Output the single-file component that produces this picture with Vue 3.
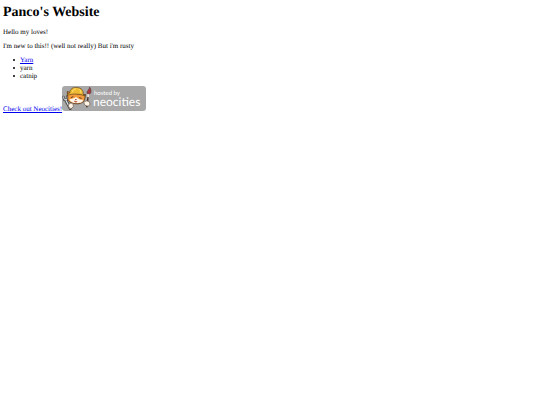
<script setup>
const items = [
  { text: 'Yarn', href: '#yarn' },
  { text: 'yarn' },
  { text: 'catnip' },
]
</script>

<template>
  <main class="page">
    <h1>Panco's Website</h1>
    <p>Hello my loves!</p>
    <p>I'm new to this!! (well not really) But i'm rusty</p>
    <ul>
      <li v-for="item in items" :key="item.text">
        <a v-if="item.href" :href="item.href">{{ item.text }}</a>
        <template v-else>{{ item.text }}</template>
      </li>
    </ul>
    <div class="hosting">
      <a href="#neocities">Check out Neocities!</a>
      <svg class="badge" viewBox="0 0 84 25" role="img" aria-label="hosted by neocities">
        <rect width="84" height="25" rx="3" fill="#a8a8a8" />
        <!-- wrench -->
        <g stroke-linecap="round" fill="none">
          <path d="M4 14.5 L8.3 22.5" stroke="#3c3c3c" stroke-width="3" />
          <path d="M1.5 10.8 L2.3 13.8 L5 13.4 L5.4 10.2" stroke="#3c3c3c" stroke-width="2.2" />
          <path d="M4 14.5 L8.3 22.5" stroke="#d7dce0" stroke-width="1.4" />
          <path d="M1.5 10.8 L2.3 13.8 L5 13.4 L5.4 10.2" stroke="#d7dce0" stroke-width="1" />
        </g>
        <!-- cat head -->
        <path d="M5.2 5.6 L5.8 11.6 C5.1 14.2 7.5 16.8 11.7 17.4 C16.5 18.7 21.4 17.1 22.5 13.8 L23.6 8.5 L19.6 8.5 L10 6.8 Z" fill="#f39a3b" stroke="#51351f" stroke-width=".8" stroke-linejoin="round" />
        <path d="M14 11 C12.4 13 9.2 12.4 7.4 13.4 C8.3 16 11.3 17 14.9 17.1 C18.8 17.3 21 15.8 21.4 14 C18.8 13.8 16 13.2 14 11Z" fill="#fff4e6" />
        <path d="M9.3 11.5 L10.9 10.8 M17.6 11.7 L19.2 12.3" stroke="#513320" stroke-width=".9" stroke-linecap="round" />
        <path d="M12.8 13 L15 13.2 L13.8 14.3Z" fill="#4b2922" />
        <path d="M12 14.8 Q13.7 15.5 15.4 15 Q15 16.6 13.6 16.5 Q12.3 16.4 12 14.8Z" fill="#b64632" />
        <!-- hard hat -->
        <path d="M7.7 7 C8 2.8 11.1.9 15.4 1.5 C19.4 2 21.7 4.5 21.1 8.3 L23 10 C17.2 7.7 11.2 7.4 5.3 9.3 L5.2 8.2Z" fill="#efbb34" stroke="#65481e" stroke-width=".7" stroke-linejoin="round" />
        <path d="M10 6.3 Q10.8 3.2 14 2.7 M17 3 Q19 4.3 19 6.9" fill="none" stroke="#ffe071" stroke-width="1" />
        <!-- brush -->
        <path d="M26.1 10.4 L24.8 20.8" stroke="#4c342b" stroke-width="1.4" stroke-linecap="round" />
        <path d="M26.5 7.2 L26 11.2" stroke="#eee7d8" stroke-width="1.8" />
        <path d="M25 7.3 C24.8 4.6 27.5 3.8 27.7 1.2 C29.4 4 29.5 6.9 27.6 8Z" fill="#ae3740" stroke="#51302f" stroke-width=".6" />
        <!-- paws -->
        <path d="M6.6 18.4 Q9 15.8 11.2 18.1 Q12.2 21 9.7 22.4 Q5.9 22.6 6.6 18.4Z M21.8 16.3 Q24.2 13.8 27.1 15.6 Q29.2 18.2 26.7 20 Q22.6 20.8 21.8 16.3Z" fill="#fff5e7" stroke="#594133" stroke-width=".6" />
        <text class="hosted" x="32" y="9">hosted by</text>
        <text class="brand" x="31" y="20">neocities</text>
      </svg>
    </div>
  </main>
</template>

<style>
body {
  margin: 0;
  background: #fff;
}
</style>

<style scoped>
.page {
  padding: 5px 3px;
  color: #000;
  font: 7px/8px "Liberation Serif", "Times New Roman", serif;
  text-rendering: geometricPrecision;
}

h1 {
  margin: 0 0 7px;
  font-size: 14px;
  line-height: 16px;
}

p {
  margin: 0 0 6px;
}

ul {
  margin: 0 0 6px;
  padding: 0;
  list-style: none;
}

li {
  display: flex;
  align-items: center;
  gap: 5px;
  padding-left: 10px;
}

li::before {
  width: 2px;
  height: 2px;
  border-radius: 50%;
  background: #000;
  content: "";
}

a {
  color: #0000ee;
}

.hosting {
  display: flex;
  align-items: baseline;
}

.badge {
  flex: none;
  width: 84px;
  height: 25px;
}

.hosted,
.brand {
  fill: #fff;
  font-family: Lato, "Open Sans", sans-serif;
}

.hosted {
  font-size: 6px;
}

.brand {
  font-size: 12px;
}
</style>
